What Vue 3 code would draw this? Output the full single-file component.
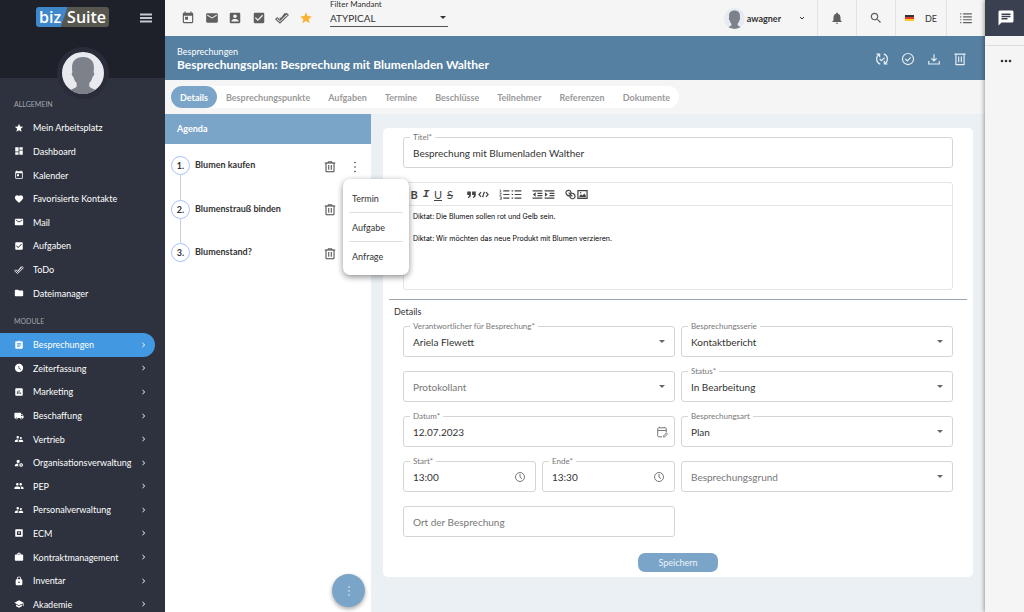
<script setup>
import { ref } from 'vue'

const I = {
  today: 'M19 3h-1V1h-2v2H8V1H6v2H5c-1.11 0-1.99.9-1.99 2L3 19c0 1.1.89 2 2 2h14c1.1 0 2-.9 2-2V5c0-1.1-.9-2-2-2zm0 16H5V8h14v11zM7 10h5v5H7z',
  mail: 'M20 4H4c-1.1 0-1.99.9-1.99 2L2 18c0 1.1.9 2 2 2h16c1.1 0 2-.9 2-2V6c0-1.1-.9-2-2-2zm0 4l-8 5-8-5V6l8 5 8-5v2z',
  contact: 'M3 5v14c0 1.1.89 2 2 2h14c1.1 0 2-.9 2-2V5c0-1.1-.9-2-2-2H5c-1.11 0-2 .9-2 2zm12 4c0 1.66-1.34 3-3 3s-3-1.34-3-3 1.34-3 3-3 3 1.34 3 3zm-9 8c0-2 4-3.1 6-3.1s6 1.1 6 3.1v1H6v-1z',
  check: 'M19 3H5c-1.11 0-2 .9-2 2v14c0 1.1.89 2 2 2h14c1.11 0 2-.9 2-2V5c0-1.1-.89-2-2-2zm-9 14l-5-5 1.41-1.41L10 14.17l7.59-7.59L19 8l-9 9z',
  done: 'M1.5 14L4 11.500l4.500 4.500L20 4.500 22.500 7 8.500 20.500zM8 11.500l2.200 2.200M8.500 16L17.500 3.500',
  star: 'M12 17.27L18.18 21l-1.64-7.03L22 9.24l-7.19-.61L12 2 9.19 8.63 2 9.24l5.46 4.73L5.82 21z',
  dashboard: 'M3 13h8V3H3v10zm0 8h8v-6H3v6zm10 0h8V11h-8v10zm0-18v6h8V3h-8z',
  heart: 'M12 21.35l-1.45-1.32C5.4 15.36 2 12.28 2 8.5 2 5.42 4.42 3 7.5 3c1.74 0 3.41.81 4.5 2.09C13.09 3.81 14.76 3 16.5 3 19.58 3 22 5.42 22 8.5c0 3.78-3.4 6.86-8.55 11.54L12 21.35z',
  folder: 'M10 4H4c-1.1 0-1.99.9-1.99 2L2 18c0 1.1.9 2 2 2h16c1.1 0 2-.9 2-2V8c0-1.1-.9-2-2-2h-8l-2-2z',
  assignment: 'M19 3h-4.18C14.4 1.84 13.3 1 12 1c-1.3 0-2.4.84-2.82 2H5c-1.1 0-2 .9-2 2v14c0 1.1.9 2 2 2h14c1.1 0 2-.9 2-2V5c0-1.1-.9-2-2-2zm-7 0c.55 0 1 .45 1 1s-.45 1-1 1-1-.45-1-1 .45-1 1-1zm2 14H7v-2h7v2zm3-4H7v-2h10v2zm0-4H7V7h10v2z',
  clock: 'M12 2C6.5 2 2 6.5 2 12s4.5 10 10 10 10-4.5 10-10S17.5 2 12 2zm4.2 14.2L11 13V7h1.5v5.2l4.5 2.7-.8 1.3z',
  chart: 'M19 3H5c-1.1 0-2 .9-2 2v14c0 1.1.9 2 2 2h14c1.1 0 2-.9 2-2V5c0-1.1-.9-2-2-2zM9 17H7v-7h2v7zm4 0h-2V7h2v10zm4 0h-2v-4h2v4z',
  truck: 'M20 8h-3V4H3c-1.1 0-2 .9-2 2v11h2c0 1.66 1.34 3 3 3s3-1.34 3-3h6c0 1.66 1.34 3 3 3s3-1.34 3-3h2v-5l-3-4zM6 18.5c-.83 0-1.5-.67-1.5-1.5s.67-1.5 1.5-1.5 1.5.67 1.5 1.5-.67 1.5-1.5 1.5zm13.5-9l1.96 2.5H17V9.5h2.5zm-1.5 9c-.83 0-1.5-.67-1.5-1.5s.67-1.5 1.5-1.5 1.5.67 1.5 1.5-.67 1.5-1.5 1.5z',
  supervisor: 'M16.5 12c1.38 0 2.49-1.12 2.49-2.5S17.88 7 16.5 7C15.12 7 14 8.12 14 9.5s1.12 2.5 2.5 2.5zM9 11c1.66 0 2.99-1.34 2.99-3S10.66 5 9 5C7.34 5 6 6.34 6 8s1.34 3 3 3zm7.5 3c-1.83 0-5.5.92-5.5 2.75V19h11v-2.25c0-1.83-3.67-2.75-5.5-2.75zM9 13c-2.33 0-7 1.17-7 3.5V19h7v-2.25c0-.85.33-2.34 2.37-3.47C10.5 13.1 9.66 13 9 13z',
  manage: 'M10 4a4 4 0 1 0 0 8a4 4 0 0 0 0-8zM10.7 13C7.6 12.800 2 14.200 2 17.500V20h9.500c-1.700-2-2-4.800-.8-7zM16.200 12h1.800l.3 1.400 1.100.6 1.400-.4.9 1.500-1 1v1.300l1 1-.9 1.500-1.400-.4-1.100.6-.3 1.400h-1.800l-.3-1.400-1.100-.6-1.400.4-.9-1.500 1-1v-1.300l-1-1 .9-1.500 1.400.4 1.100-.6zM17.100 15.200a1.600 1.600 0 1 0 0 3.200a1.600 1.600 0 0 0 0-3.200z',
  group: 'M16 11c1.66 0 2.99-1.34 2.99-3S17.66 5 16 5c-1.66 0-3 1.34-3 3s1.34 3 3 3zm-8 0c1.66 0 2.99-1.34 2.99-3S9.66 5 8 5C6.34 5 5 6.34 5 8s1.34 3 3 3zm0 2c-2.33 0-7 1.17-7 3.5V19h14v-2.500c0-2.330-4.670-3.500-7-3.500zm8 0c-.29 0-.62.02-.97.05 1.160.84 1.970 1.970 1.970 3.450V19h6v-2.500c0-2.330-4.670-3.500-7-3.500z',
  ecm: 'M4 3h16a1 1 0 0 1 1 1v16a1 1 0 0 1-1 1H4a1 1 0 0 1-1-1V4a1 1 0 0 1 1-1zM7 8v9h10V8zM10 10h4v2l-2 3-2-3z',
  work: 'M20 6h-4V4c0-1.110-.89-2-2-2h-4c-1.110 0-2 .89-2 2v2H4c-1.110 0-1.990.89-1.990 2L2 19c0 1.110.89 2 2 2h16c1.110 0 2-.89 2-2V8c0-1.110-.89-2-2-2zm-6 0h-4V4h4v2z',
  lock: 'M18 8h-1V6c0-2.760-2.240-5-5-5S7 3.240 7 6v2H6c-1.100 0-2 .9-2 2v10c0 1.100.9 2 2 2h12c1.100 0 2-.9 2-2V10c0-1.100-.9-2-2-2zm-6 9c-1.100 0-2-.9-2-2s.9-2 2-2 2 .9 2 2-.9 2-2 2zm3.100-9H8.900V6c0-1.710 1.390-3.100 3.100-3.100 1.710 0 3.100 1.390 3.100 3.100v2z',
  school: 'M5 13.180v4L12 21l7-3.820v-4L12 17l-7-3.820zM12 3L1 9l11 6 9-4.910V17h2V9L12 3z',
  bell: 'M12 22c1.100 0 2-.9 2-2h-4c0 1.100.89 2 2 2zm6-6v-5c0-3.070-1.640-5.640-4.500-6.320V4c0-.83-.67-1.500-1.500-1.500s-1.500.67-1.500 1.500v.68C7.630 5.360 6 7.920 6 11v5l-2 2v1h16v-1l-2-2z',
  search: 'M15.500 14h-.79l-.28-.27C15.410 12.590 16 11.110 16 9.500 16 5.910 13.090 3 9.500 3S3 5.910 3 9.500 5.910 16 9.500 16c1.610 0 3.090-.59 4.230-1.570l.27.28v.79l5 4.990L20.490 19l-4.990-5zm-6 0C7.010 14 5 11.990 5 9.500S7.010 5 9.500 5 14 7.010 14 9.500 11.990 14 9.500 14z',
  list: 'M2 4h2v2H2zM7 4h15v2H7zM2 9h2v2H2zM7 9h15v2H7zM2 14h2v2H2zM7 14h15v2H7zM2 19h2v2H2zM7 19h15v2H7z',
  chat: 'M20 2H4c-1.100 0-1.990.9-1.990 2L2 22l4-4h14c1.100 0 2-.9 2-2V4c0-1.100-.9-2-2-2zM6 9h12v2H6V9zm8 5H6v-2h8v2zm4-6H6V6h12v2z'
}

const person = 'M50 12c-17 0-27 10-26 27 0 3 0 6 1 9-3 1-2 8 2 11 2 8 5 12 8 15v8C30 89 12 90 4 100h92c-8-10-26-11-31-18v-8c3-3 6-7 8-15 4-3 5-10 2-11 1-3 1-6 1-9 1-17-9-27-26-27z'

const general = [
  ['star', 'Mein Arbeitsplatz'],
  ['dashboard', 'Dashboard'],
  ['today', 'Kalender'],
  ['heart', 'Favorisierte Kontakte'],
  ['mail', 'Mail'],
  ['check', 'Aufgaben'],
  ['done', 'ToDo'],
  ['folder', 'Dateimanager']
]
const modules = [
  ['assignment', 'Besprechungen'],
  ['clock', 'Zeiterfassung'],
  ['chart', 'Marketing'],
  ['truck', 'Beschaffung'],
  ['supervisor', 'Vertrieb'],
  ['manage', 'Organisationsverwaltung'],
  ['group', 'PEP'],
  ['supervisor', 'Personalverwaltung'],
  ['ecm', 'ECM'],
  ['work', 'Kontraktmanagement'],
  ['lock', 'Inventar'],
  ['school', 'Akademie']
]
const shortcuts = [
  ['today', 'Kalender'],
  ['mail', 'Mail'],
  ['contact', 'Kontakte'],
  ['check', 'Aufgaben'],
  ['done', 'ToDo'],
  ['star', 'Favoriten']
]
const tabs = ['Details', 'Besprechungspunkte', 'Aufgaben', 'Termine', 'Beschlüsse', 'Teilnehmer', 'Referenzen', 'Dokumente']
const activeTab = ref('Details')
const agenda = ['Blumen kaufen', 'Blumenstrauß binden', 'Blumenstand?']
const menu = ['Termin', 'Aufgabe', 'Anfrage']

const title = ref('Besprechung mit Blumenladen Walther')
const notes = ref('Diktat: Die Blumen sollen rot und Gelb sein.\n\nDiktat: Wir möchten das neue Produkt mit Blumen verzieren.')
const fields = [
  { id: 'owner', label: 'Verantwortlicher für Besprechung*', value: 'Ariela Flewett', type: 'select' },
  { id: 'series', label: 'Besprechungsserie', value: 'Kontaktbericht', type: 'select' },
  { id: 'recorder', label: 'Protokollant', value: '', type: 'select' },
  { id: 'status', label: 'Status*', value: 'In Bearbeitung', type: 'select' },
  { id: 'date', label: 'Datum*', value: '12.07.2023', type: 'date' },
  { id: 'kind', label: 'Besprechungsart', value: 'Plan', type: 'select' },
  { id: 'start', label: 'Start*', value: '13:00', type: 'time', half: true },
  { id: 'end', label: 'Ende*', value: '13:30', type: 'time', half: true },
  { id: 'reason', label: 'Besprechungsgrund', value: '', type: 'select' },
  { id: 'place', label: 'Ort der Besprechung', value: '', type: 'text' }
]
</script>

<template>
  <div class="app">
    <aside class="sidebar">
      <div class="brand">
        <a class="logo" href="#" aria-label="biz Suite"><span class="biz">biz</span><span class="suite">Suite</span></a>
        <button class="burger" aria-label="Menü">
          <svg viewBox="0 0 12 10"><path d="M0 1.500h12M0 5h12M0 8.500h12" /></svg>
        </button>
      </div>
      <div class="portrait">
        <svg viewBox="0 0 100 100"><path :d="person" /></svg>
      </div>
      <nav class="nav">
        <h2>ALLGEMEIN</h2>
        <ul class="general">
          <li v-for="g in general" :key="g[1]">
            <a href="#"><svg viewBox="0 0 24 24" :class="{ line: g[0] === 'done' }"><path :d="I[g[0]]" /></svg><span>{{ g[1] }}</span></a>
          </li>
        </ul>
        <h2 class="second">MODULE</h2>
        <ul class="modules">
          <li v-for="(m, i) in modules" :key="m[1]">
            <a href="#" :class="{ active: i === 0 }">
              <svg viewBox="0 0 24 24" fill-rule="evenodd"><path :d="I[m[0]]" /></svg><span>{{ m[1] }}</span>
              <svg class="chev" viewBox="0 0 6 8"><path d="M1.500 2L3.700 4 1.500 6" /></svg>
            </a>
          </li>
        </ul>
      </nav>
    </aside>

    <main class="main">
      <header class="topbar">
        <div class="shortcuts">
          <button v-for="s in shortcuts" :key="s[1]" :aria-label="s[1]" :class="s[0]">
            <svg viewBox="0 0 24 24" :class="{ line: s[0] === 'done' }"><path :d="I[s[0]]" /></svg>
          </button>
        </div>
        <div class="client">
          <label for="client">Filter Mandant</label>
          <select id="client"><option>ATYPICAL</option></select>
          <svg class="tri" viewBox="0 0 8 4"><path d="M0 0h8L4 4z" /></svg>
        </div>
        <div class="account">
          <button class="user">
            <span class="face"><svg viewBox="0 0 100 100"><path :d="person" /></svg></span>
            <span class="name">awagner</span>
            <svg class="down" viewBox="0 0 8 6"><path d="M2 2l2 2 2-2" /></svg>
          </button>
          <button class="cell" aria-label="Benachrichtigungen"><svg viewBox="0 0 24 24"><path :d="I.bell" /></svg></button>
          <button class="cell" aria-label="Suche"><svg viewBox="0 0 24 24"><path :d="I.search" /></svg></button>
          <button class="cell lang"><span class="flag"></span>DE</button>
          <button class="cell" aria-label="Liste"><svg viewBox="0 0 24 24"><path :d="I.list" /></svg></button>
        </div>
      </header>

      <div class="titlebar">
        <div>
          <a href="#">Besprechungen</a>
          <h1>Besprechungsplan: Besprechung mit Blumenladen Walther</h1>
        </div>
        <div class="actions">
          <button aria-label="Aktualisieren"><svg viewBox="0 0 24 24"><path d="M9 20.800A9.300 9.300 0 0 1 7 4.200M2.500 3.500H8V9M15 3.200A9.300 9.300 0 0 1 17 19.800M21.500 20.500H16V15M8 12l3 3 5.500-5.500" /></svg></button>
          <button aria-label="Abschließen"><svg viewBox="0 0 24 24"><circle cx="12" cy="12" r="9.500" /><path d="M7.500 12l3.300 3.300 6-6" /></svg></button>
          <button aria-label="Herunterladen"><svg viewBox="0 0 24 24"><path d="M12 4v11M7.500 10.800L12 15.300l4.500-4.500M3 15.500V20.500h18v-5" /></svg></button>
          <button aria-label="Löschen"><svg viewBox="0 0 24 24"><path d="M2.500 3.500h19M5 3.500V21.500h14v-18M9.700 7.500v10M14.300 7.500v10" /></svg></button>
        </div>
      </div>

      <div class="tabrow">
        <div class="tabs" role="tablist">
          <button v-for="t in tabs" :key="t" role="tab" :aria-selected="t === activeTab" :class="{ on: t === activeTab }" @click="activeTab = t">{{ t }}</button>
        </div>
      </div>

      <div class="content">
        <section class="agenda">
          <h2>Agenda</h2>
          <ol>
            <li v-for="(a, i) in agenda" :key="a">
              <span class="num">{{ i + 1 }}.</span>
              <span class="what">{{ a }}</span>
              <button class="trash" aria-label="Löschen"><svg viewBox="0 0 24 24"><path d="M1.500 4h21M8 4V1.800h8V4M4 4v17.500h16V4M9.500 8v9.500M14.500 8v9.500" /></svg></button>
              <button class="more" aria-label="Mehr"><svg viewBox="0 0 4 12"><circle cx="2" cy="1.500" r=".8" /><circle cx="2" cy="6" r=".8" /><circle cx="2" cy="10.500" r=".8" /></svg></button>
              <div v-if="i === 0" class="popup" role="menu">
                <button v-for="m in menu" :key="m" role="menuitem">{{ m }}</button>
              </div>
            </li>
          </ol>
          <button class="fab" aria-label="Aktionen"><svg viewBox="0 0 4 12"><circle cx="2" cy="2" r=".7" /><circle cx="2" cy="6" r=".7" /><circle cx="2" cy="10" r=".7" /></svg></button>
        </section>

        <div class="stage">
          <form class="card" @submit.prevent>
            <div class="block">
              <div class="field">
                <input id="title" v-model="title" type="text" />
                <label for="title">Titel*</label>
              </div>
              <div class="editor">
                <div class="tools">
                  <div>
                    <button type="button" class="b">B</button>
                    <button type="button" class="i">I</button>
                    <button type="button" class="u">U</button>
                    <button type="button" class="s">S</button>
                  </div>
                  <div>
                    <button type="button" aria-label="Zitat"><svg viewBox="0 0 18 18"><path class="solid" d="M2 4h6v6c0 3-2 4-4 5l-1-1.500c1.500-.7 2-1.500 2-3.500H2zM10 4h6v6c0 3-2 4-4 5l-1-1.500c1.500-.7 2-1.500 2-3.500h-3z" /></svg></button>
                    <button type="button" aria-label="Code"><svg viewBox="0 0 18 18"><path d="M5 5L1.500 9 5 13M13 5l3.500 4L13 13M10.500 4.500l-3 9" /></svg></button>
                  </div>
                  <div>
                    <button type="button" aria-label="Nummerierte Liste"><svg viewBox="0 0 18 18"><path d="M7 3h10M7 9h10M7 15h10" /><path class="thin" d="M1 1.500h1.500V5M1 5h3M1 7.500h3L1 11h3M1 13h3v4H1M2 15h2" /></svg></button>
                    <button type="button" aria-label="Liste"><svg viewBox="0 0 18 18"><path d="M6 3h11M6 9h11M6 15h11M1 3h2.500M1 9h2.500M1 15h2.500" /></svg></button>
                  </div>
                  <div>
                    <button type="button" aria-label="Einzug verkleinern"><svg viewBox="0 0 18 18"><path d="M1 3h16M9 7h8M9 11h8M1 15h16" /><path class="solid" d="M6 5.500v7L1.500 9z" /></svg></button>
                    <button type="button" aria-label="Einzug vergrößern"><svg viewBox="0 0 18 18"><path d="M1 3h16M9 7h8M9 11h8M1 15h16" /><path class="solid" d="M1.500 5.500v7L6 9z" /></svg></button>
                  </div>
                  <div>
                    <button type="button" aria-label="Link"><svg viewBox="0 0 18 18"><path d="M9.500 9.500c-2 2-5 1.500-6.500 0S1 5 2.500 3.500 7 1.500 8.500 3s1.500 3 1 4M8.500 8.500c2-2 5-1.500 6.500 0s2 4.500.5 6-4.500 2-6 .5-1.500-3-1-4M6 6l6 6" /></svg></button>
                    <button type="button" aria-label="Bild"><svg viewBox="0 0 18 18"><path d="M1.500 2.500h15v13h-15z" /><path class="solid" d="M4 13.500v-2l2.500-3 2.500 2 3-3 2.500 3.500v2.500z" /><circle class="solid" cx="6" cy="6" r="1.200" /></svg></button>
                  </div>
                </div>
                <textarea v-model="notes" aria-label="Beschreibung"></textarea>
              </div>
            </div>

            <h3>Details</h3>
            <div class="grid">
              <div v-for="f in fields" :key="f.id" class="field" :class="{ half: f.half, empty: !f.value }">
                <select v-if="f.type === 'select'" :id="f.id"><option>{{ f.value }}</option></select>
                <input v-else :id="f.id" type="text" :value="f.value" />
                <label :for="f.id">{{ f.label }}</label>
                <svg v-if="f.type === 'select'" class="tri" viewBox="0 0 8 4"><path d="M0 0h8L4 4z" /></svg>
                <svg v-if="f.type === 'time'" class="mark" viewBox="0 0 12 12"><circle cx="6" cy="6" r="4.500" /><path d="M6 3v3.200l2 1.500" /></svg>
                <svg v-if="f.type === 'date'" class="mark date" viewBox="0 0 12 12"><path d="M6 10.800H2.700A1 1 0 0 1 1.700 9.800V2.800a1 1 0 0 1 1-1h6.600a1 1 0 0 1 1 1V6.500M1.700 4.500h8.600M3.700.8v1M8.300.8v1M7.500 11l.3-1.400 2.600-2.600 1.100 1.100-2.600 2.600z" /></svg>
              </div>
            </div>
            <button class="save" type="submit">Speichern</button>
          </form>
        </div>
      </div>
    </main>

    <aside class="rail">
      <button class="chat" aria-label="Chat"><svg viewBox="0 0 24 24"><path :d="I.chat" /></svg></button>
      <div class="rule"></div>
      <button class="dots" aria-label="Mehr"><svg viewBox="0 0 12 4"><circle cx="2" cy="2" r="1.300" /><circle cx="6" cy="2" r="1.300" /><circle cx="10" cy="2" r="1.300" /></svg></button>
    </aside>
  </div>
</template>

<style>
html,
body {
  margin: 0;
  overflow: hidden;
}
</style>

<style scoped>
* {
  box-sizing: border-box;
}
.app {
  display: flex;
  height: 100vh;
  overflow: hidden;
  font-family: Lato, "Open Sans", sans-serif;
  font-size: 9px;
  color: #333;
  background: #f5f5f5;
}
button,
input,
select,
textarea {
  font: inherit;
  color: inherit;
  border: 0;
  background: none;
  padding: 0;
  margin: 0;
  outline: none;
}
button {
  display: inline-flex;
  align-items: center;
  justify-content: center;
}
select {
  appearance: none;
}
a {
  color: inherit;
  text-decoration: none;
}
ul,
ol {
  list-style: none;
  margin: 0;
  padding: 0;
}
h1,
h2,
h3 {
  margin: 0;
}
svg {
  display: block;
  fill: currentColor;
}
.line {
  fill: none;
  stroke: currentColor;
  stroke-width: 2;
}

/* Sidebar */
.sidebar {
  flex: none;
  width: 165px;
  background: #2d323e;
  color: #fff;
  overflow: hidden;
}
.brand {
  display: flex;
  align-items: flex-start;
  justify-content: space-between;
  height: 78px;
  padding: 7px 13px 0 36px;
  background: #1e2129;
}
.logo {
  display: flex;
  align-items: center;
  gap: 6px;
  height: 20px;
  padding: 0 3px;
  border-radius: 3px;
  background: linear-gradient(109deg, #3f87cb 39%, #57574f 40%);
  font-family: "Open Sans", "Noto Sans", sans-serif;
  font-size: 16px;
  font-weight: 600;
}
.burger {
  color: #c6c8cd;
  height: 21px;
}
.burger svg {
  width: 12px;
  height: 10px;
  stroke: currentColor;
  stroke-width: 2;
}
.portrait {
  width: 52px;
  height: 52px;
  margin: -31px auto 0;
  border: 5px solid #2a2d39;
  border-radius: 50%;
  background: #e8eaf0;
  overflow: hidden;
  color: #7c818a;
}
.nav h2 {
  padding: 0 14px;
  font-size: 7px;
  line-height: 10px;
  font-weight: 400;
  color: #a2a5ac;
}
.nav h2.second {
  margin: 11px 0 7px;
}
.nav ul {
  display: grid;
  grid-auto-rows: 1fr;
}
.general {
  margin-top: 7px;
  height: 189px;
}
.modules {
  height: 283px;
}
.nav li {
  display: flex;
}
.nav a {
  flex: 1;
  display: flex;
  align-items: center;
  padding: 0 8px 0 14px;
  margin-right: 10px;
  border-radius: 0 12px 12px 0;
}
.nav a.active {
  background: #4299e1;
}
.nav a > svg:first-child {
  width: 10px;
  height: 10px;
  margin-right: 9px;
}
.nav a span {
  flex: 1;
}
.nav .chev {
  width: 6px;
  height: 8px;
  fill: none;
  stroke: #fff;
}

/* Top bar */
.main {
  flex: 1;
  min-width: 0;
  display: flex;
  flex-direction: column;
}
.topbar {
  display: flex;
  height: 36px;
  padding-left: 16px;
  color: #5f5f5f;
}
.shortcuts {
  display: flex;
  align-items: center;
  justify-content: space-between;
  width: 132px;
}
.shortcuts svg {
  width: 14px;
  height: 14px;
}
.shortcuts .star {
  color: #f9b233;
}
.client {
  position: relative;
  width: 118px;
  height: 27px;
  margin-left: 17px;
  border-bottom: 1px solid #555;
  color: #333;
}
.client label {
  display: block;
  font-size: 8px;
  line-height: 9px;
}
.client select {
  width: 100%;
  height: 17px;
  font-size: 10px;
}
.tri {
  position: absolute;
  right: 2px;
  bottom: 7px;
  width: 6px;
  height: 3px;
  pointer-events: none;
}
.account {
  display: flex;
  margin-left: auto;
}
.user {
  color: #333;
  font-weight: 700;
  padding-right: 11px;
}
.face {
  width: 21px;
  height: 21px;
  border-radius: 50%;
  overflow: hidden;
  background: #e6ebf3;
  color: #7c818a;
  margin-right: 2px;
}
.down {
  width: 8px;
  height: 6px;
  margin-left: 17px;
  fill: none;
  stroke: #333;
}
.cell {
  width: 39px;
  border-left: 1px solid #e2e2e2;
}
.cell svg {
  width: 14px;
  height: 14px;
}
.lang {
  width: 51px;
  gap: 11px;
  color: #333;
}
.flag {
  width: 9px;
  height: 6px;
  background: linear-gradient(#333 33%, #e03c31 33% 66%, #ffc726 66%);
}

/* Title bar */
.titlebar {
  display: flex;
  align-items: center;
  justify-content: space-between;
  height: 44px;
  padding: 1px 18px 0 12px;
  background: #5580a2;
  color: #fff;
}
.titlebar a {
  display: block;
  line-height: 11px;
}
.titlebar h1 {
  font-size: 12px;
  line-height: 15px;
  font-weight: 700;
}
.actions {
  display: flex;
  gap: 12px;
}
.actions svg {
  width: 14px;
  height: 14px;
  fill: none;
  stroke: #e7eef4;
  stroke-width: 2;
}

/* Tabs */
.tabrow {
  height: 34px;
  padding: 6px;
}
.tabs {
  display: inline-flex;
  height: 22px;
  border-radius: 11px;
  background: #fff;
  font-weight: 700;
  color: #9a9a9a;
}
.tabs button {
  padding: 0 9px;
  border-radius: 11px;
}
.tabs .on {
  background: #7aa5c9;
  color: #fff;
}

/* Agenda */
.content {
  flex: 1;
  display: flex;
  min-height: 0;
}
.agenda {
  position: relative;
  z-index: 1;
  flex: none;
  width: 206px;
  background: #fff;
}
.agenda h2 {
  padding: 0 12px;
  font-size: 9px;
  line-height: 30px;
  background: #7aa5c9;
  color: #fff;
}
.agenda ol {
  display: grid;
  grid-auto-rows: 1fr;
  height: 131px;
  margin-top: 12px;
}
.agenda li {
  position: relative;
  display: flex;
  align-items: flex-start;
  padding: 0 11px 0 6px;
  font-weight: 700;
}
.agenda li:not(:last-child)::before {
  content: "";
  position: absolute;
  left: 15px;
  top: 19px;
  bottom: 0;
  width: 1px;
  background: #c5cde0;
}
.num {
  width: 19px;
  height: 19px;
  border: 1px solid #a9c1fa;
  border-radius: 50%;
  line-height: 17px;
  text-align: center;
}
.what {
  flex: 1;
  margin-left: 5px;
  line-height: 17px;
}
.trash {
  width: 12px;
  height: 21px;
}
.trash svg {
  width: 12px;
  height: 12px;
  fill: none;
  stroke: #444;
  stroke-width: 2;
}
.more {
  width: 10px;
  height: 21px;
  margin-left: 14px;
}
.more svg {
  width: 4px;
  height: 12px;
}
.popup {
  position: absolute;
  z-index: 2;
  top: 23px;
  left: 178px;
  width: 66px;
  padding: 5px 6px;
  border-radius: 7px;
  background: #fff;
  box-shadow: 0 2px 6px rgba(0, 0, 0, 0.45);
  font-weight: 400;
}
.popup button {
  display: block;
  width: 100%;
  height: 28px;
  padding-left: 3px;
  text-align: left;
}
.popup button + button {
  height: 29px;
  border-top: 1px solid #dcdfe4;
}
.fab {
  position: absolute;
  right: 6px;
  bottom: 5px;
  width: 33px;
  height: 33px;
  border-radius: 50%;
  background: #7aa5c9;
  color: #fff;
  box-shadow: 0 2px 4px rgba(0, 0, 0, 0.35);
}
.fab svg {
  width: 4px;
  height: 12px;
}

/* Form */
.stage {
  flex: 1;
  min-width: 0;
  padding: 14px 12px 0;
  background: #ebf0f5;
}
.card {
  padding: 9px 6px 5px;
  border-radius: 5px;
  background: #fff;
}
.block {
  padding: 0 14px 9px;
  border-bottom: 1px solid #9aa5ae;
}
.field {
  position: relative;
  height: 31px;
  border: 1px solid #d5d5d5;
  border-radius: 3px;
  font-size: 10px;
}
.field input,
.field select {
  display: block;
  width: 100%;
  height: 100%;
  padding: 0 9px;
}
.field label {
  position: absolute;
  top: -5px;
  left: 6px;
  padding: 0 3px;
  background: #fff;
  font-size: 8px;
  line-height: 9px;
  color: #777;
  white-space: nowrap;
}
.field.empty label {
  top: 8px;
  font-size: 10px;
  line-height: 14px;
  pointer-events: none;
}
.field .tri {
  right: 9px;
  bottom: 13px;
  fill: #666;
}
.mark {
  position: absolute;
  top: 9px;
  right: 9px;
  width: 12px;
  height: 12px;
  fill: none;
  stroke: #777;
}
.mark.date {
  right: 6px;
}
.editor {
  margin-top: 14px;
  border: 1px solid #e4e4e4;
  border-radius: 3px;
}
.tools {
  display: flex;
  gap: 9px;
  height: 23px;
  padding: 0 4px;
  border-bottom: 1px solid #e4e4e4;
  color: #444;
}
.tools div {
  display: flex;
}
.tools button {
  width: 12px;
  font-size: 11px;
}
.tools svg {
  width: 11px;
  height: 11px;
  fill: none;
  stroke: currentColor;
  stroke-width: 2;
}
.tools .solid {
  fill: currentColor;
  stroke: none;
}
.tools .thin {
  stroke-width: 1;
}
.b {
  font-weight: 700;
}
.tools .i {
  font-family: "Liberation Mono", monospace;
  font-style: italic;
  font-weight: 700;
}
.u {
  text-decoration: underline;
}
.s {
  text-decoration: line-through;
}
.editor textarea {
  display: block;
  width: 100%;
  height: 83px;
  padding: 5px 9px;
  resize: none;
  font-family: Inter, "Liberation Sans", sans-serif;
  font-size: 7px;
  line-height: 11px;
  color: #000;
}
.card h3 {
  padding: 5px 5px 7px;
  font-size: 9px;
  line-height: 14px;
  font-weight: 400;
}
.grid {
  display: grid;
  grid-template-columns: repeat(4, 1fr);
  gap: 14px 6px;
  padding: 0 14px;
}
.grid .field {
  grid-column: span 2;
}
.grid .half {
  grid-column: span 1;
}
.save {
  display: flex;
  width: 80px;
  height: 19px;
  margin: 16px auto 0;
  border-radius: 7px;
  background: #7aa5c9;
  color: #edf3f8;
}

/* Right rail */
.rail {
  position: relative;
  z-index: 2;
  flex: none;
  width: 39px;
  background: #f5f5f5;
  box-shadow: -1px 0 4px rgba(0, 0, 0, 0.35);
}
.chat {
  width: 100%;
  height: 36px;
  padding-left: 3px;
  background: #3b4050;
  color: #fff;
}
.chat svg {
  width: 18px;
  height: 18px;
}
.rule {
  height: 10px;
  border-bottom: 1px solid #ddd;
}
.dots {
  width: 100%;
  height: 30px;
  padding-left: 3px;
}
.dots svg {
  width: 12px;
  height: 4px;
}
</style>
